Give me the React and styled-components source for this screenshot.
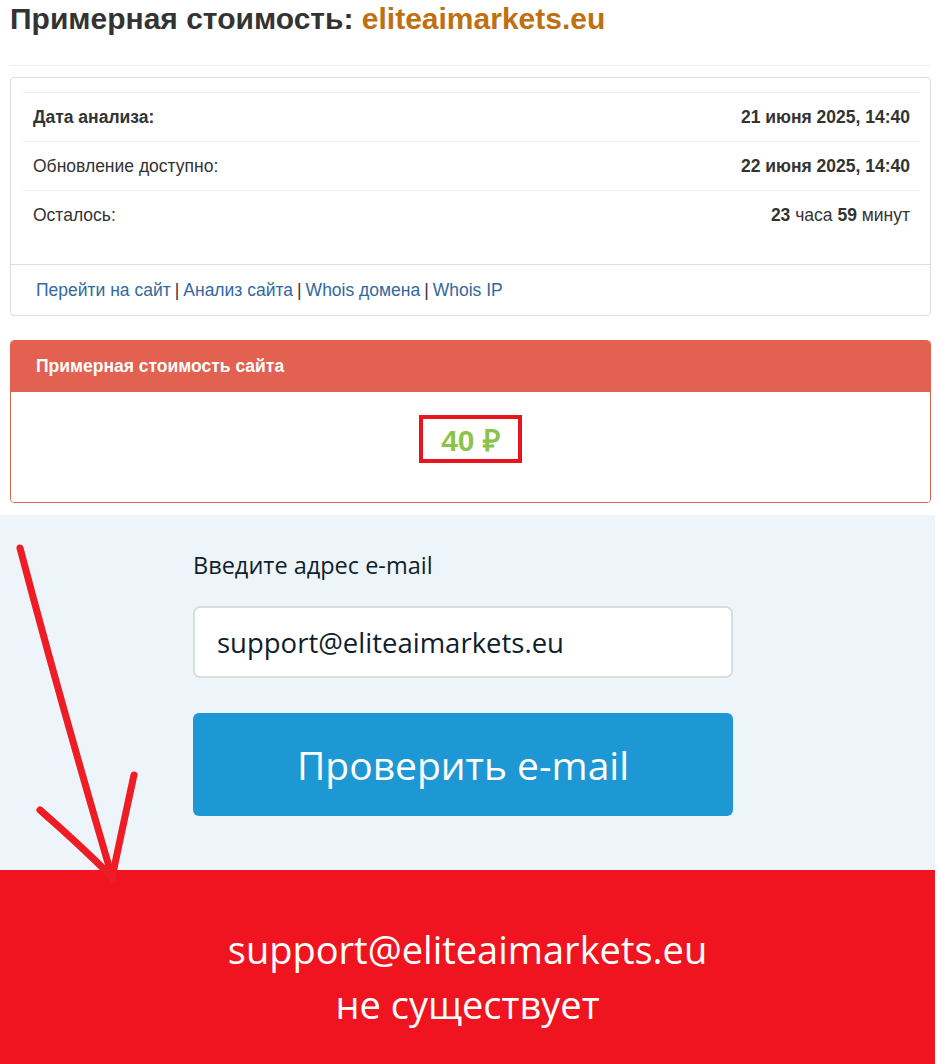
import React from 'react';
import styled, { createGlobalStyle } from 'styled-components';

const GlobalStyle = createGlobalStyle`
  body {
    margin: 0;
    background: #fff;
    font-family: "Liberation Sans", Arial, sans-serif;
  }
`;

const rows = [
  { label: 'Дата анализа:', bold: true, value: <b>21 июня 2025, 14:40</b> },
  { label: 'Обновление доступно:', value: <b>22 июня 2025, 14:40</b> },
  { label: 'Осталось:', value: <><b>23</b> часа <b>59</b> минут</> },
];

const links = ['Перейти на сайт', 'Анализ сайта', 'Whois домена', 'Whois IP'];

const App = () => {
  return (
    <Page>
      <GlobalStyle />
      <Top>
        <Title>
          Примерная стоимость: <Domain>eliteaimarkets.eu</Domain>
        </Title>
        <Rule />
        <Panel>
          <PanelBody>
            <Table>
              <tbody>
                {rows.map((r) => (
                  <tr key={r.label}>
                    <Cell $bold={r.bold}>{r.label}</Cell>
                    <Cell $right>{r.value}</Cell>
                  </tr>
                ))}
              </tbody>
            </Table>
          </PanelBody>
          <PanelFooter>
            {links.map((l, i) => (
              <React.Fragment key={l}>
                {i > 0 && <Sep>|</Sep>}
                <Link href="#">{l}</Link>
              </React.Fragment>
            ))}
          </PanelFooter>
        </Panel>
        <PricePanel>
          <PriceHeader>Примерная стоимость сайта</PriceHeader>
          <PriceBody>
            <PriceBox>40 ₽</PriceBox>
          </PriceBody>
        </PricePanel>
      </Top>
      <Checker>
        <Form>
          <Label>Введите адрес e-mail</Label>
          <Input readOnly value="support@eliteaimarkets.eu" />
          <Button>Проверить e-mail</Button>
        </Form>
      </Checker>
      <Result>
        <ResultLine>support@eliteaimarkets.eu</ResultLine>
        <ResultLine>не существует</ResultLine>
      </Result>
      <Arrow width="160" height="360" viewBox="0 0 160 360">
        <g stroke="#ee1c25" strokeWidth="7" strokeLinecap="round" fill="none">
          <path d="M20 8 Q60 160 113 340" />
          <path d="M40 270 Q80 305 111 336" />
          <path d="M134 235 Q122 290 112 338" />
        </g>
      </Arrow>
    </Page>
  );
};

export default App;

const Page = styled.div`
  position: relative;
  width: 939px;
  min-height: 1064px;
  overflow: hidden;
`;

const Top = styled.div`
  padding: 0 8px 12px 10px;
`;

const Title = styled.h1`
  margin: 0;
  padding-top: 2px;
  font-size: 30px;
  line-height: 34px;
  font-weight: bold;
  color: #333;
`;

const Domain = styled.span`
  color: #c07010;
`;

const Rule = styled.div`
  margin-top: 29px;
  border-top: 1px solid #eee;
  margin-bottom: 11px;
`;

const Panel = styled.div`
  border: 1px solid #ddd;
  border-radius: 4px;
  margin-bottom: 24px;
`;

const PanelBody = styled.div`
  padding: 14px 10px 25px 12px;
`;

const Table = styled.table`
  width: 100%;
  border-collapse: collapse;
  font-size: 17.5px;
  color: #333;
`;

const Cell = styled.td`
  border-top: 1px solid #eee;
  padding: 0 10px;
  height: 48px;
  text-align: ${(p) => (p.$right ? 'right' : 'left')};
  font-weight: ${(p) => (p.$bold ? 'bold' : 'normal')};
`;

const PanelFooter = styled.div`
  border-top: 1px solid #ddd;
  padding: 0 25px;
  height: 50px;
  display: flex;
  align-items: center;
  font-size: 17.5px;
  color: #333;
`;

const Link = styled.a`
  color: #3169a0;
  text-decoration: none;
`;

const Sep = styled.span`
  margin: 0 4px;
`;

const PricePanel = styled.div`
  border: 1px solid #e36150;
  border-radius: 4px;
  overflow: hidden;
`;

const PriceHeader = styled.div`
  background: #e36150;
  color: #fff;
  font-weight: bold;
  font-size: 17.5px;
  height: 51px;
  display: flex;
  align-items: center;
  padding-left: 25px;
`;

const PriceBody = styled.div`
  background: #fff;
  display: flex;
  justify-content: center;
  padding: 23px 0 39px;
`;

const PriceBox = styled.div`
  border: 4px solid #e8141e;
  width: 95px;
  height: 40px;
  box-sizing: content-box;
  display: flex;
  align-items: center;
  justify-content: center;
  color: #8bc34a;
  font-weight: bold;
  font-size: 30px;
`;

const Checker = styled.div`
  width: 935px;
  background: #eef5fa;
  padding: 35px 0 54px;
  font-family: "Open Sans", "Noto Sans", sans-serif;
`;

const Form = styled.div`
  width: 540px;
  margin-left: 193px;
  display: flex;
  flex-direction: column;
`;

const Label = styled.div`
  font-size: 23.5px;
  line-height: 30px;
  color: #0f1e2d;
  margin-bottom: 26px;
`;

const Input = styled.input`
  box-sizing: border-box;
  height: 72px;
  border: 2px solid #dcdcdc;
  border-radius: 7px;
  background: #fff;
  padding: 0 22px;
  font-family: inherit;
  font-size: 27.5px;
  color: #0f1e2d;
  outline: none;
  margin-bottom: 35px;
`;

const Button = styled.button`
  height: 103px;
  border: none;
  border-radius: 6px;
  background: #1e98d4;
  color: #fff;
  font-family: inherit;
  font-size: 39px;
  cursor: pointer;
`;

const Result = styled.div`
  width: 935px;
  height: 194px;
  background: #f01420;
  color: #fff;
  display: flex;
  flex-direction: column;
  align-items: center;
  justify-content: center;
  font-family: "Open Sans", "Noto Sans", sans-serif;
  font-size: 38px;
  padding-top: 20px;
  box-sizing: border-box;
`;

const ResultLine = styled.div`
  line-height: 55px;
`;

const Arrow = styled.svg`
  position: absolute;
  left: 0;
  top: 540px;
  pointer-events: none;
`;
